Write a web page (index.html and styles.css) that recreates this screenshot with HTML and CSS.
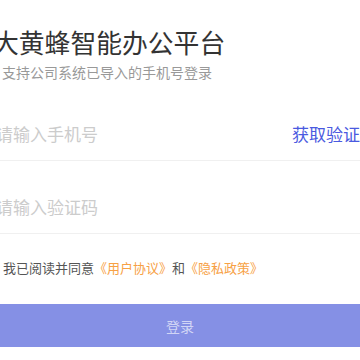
FILE: index.html
```html
<!DOCTYPE html>
<html lang="zh-CN">
<head>
<meta charset="utf-8">
<title>大黄蜂智能办公平台</title>
<link rel="stylesheet" href="styles.css">
</head>
<body>
<div class="page">
  <h1 class="title">大黄蜂智能办公平台</h1>
  <p class="subtitle">支持公司系统已导入的手机号登录</p>
  <div class="field field-phone">
    <input class="input" type="tel" placeholder="请输入手机号">
    <span class="get-code">获取验证码</span>
  </div>
  <div class="field field-code">
    <input class="input" type="text" placeholder="请输入验证码">
  </div>
  <p class="agree">我已阅读并同意<span class="link">《用户协议》</span>和<span class="link">《隐私政策》</span></p>
  <button class="login" type="button">登录</button>
</div>
</body>
</html>
```
FILE: styles.css
```css
html, body {
  margin: 0;
  padding: 0;
  background: #ffffff;
  overflow: hidden;
}
body {
  font-family: "Noto Sans CJK SC", "Noto Sans", sans-serif;
  width: 360px;
  height: 360px;
}
.page {
  display: flex;
  flex-direction: column;
  width: 360px;
}
.title {
  margin: 25px 0 0 -7px;
  font-size: 25.8px;
  line-height: 34px;
  font-weight: 400;
  color: #333333;
  white-space: nowrap;
}
.subtitle {
  margin: 3px 0 0 2px;
  font-size: 14px;
  line-height: 20px;
  color: #999999;
  white-space: nowrap;
}
.field {
  display: flex;
  align-items: center;
  height: 53px;
  border-bottom: 1px solid #f0f0f0;
}
.field-phone {
  margin-top: 25px;
}
.field-code {
  margin-top: 19px;
}
.input {
  border: none;
  outline: none;
  padding: 0;
  margin-left: -4px;
  width: 296px;
  flex: none;
  font-family: inherit;
  font-size: 17px;
  line-height: 24px;
  color: #333333;
  background: transparent;
}
.input::placeholder {
  color: #cccccc;
}
.get-code {
  flex: none;
  white-space: nowrap;
  font-size: 17px;
  color: #4a5ae0;
}
.agree {
  margin: 25px 0 0 3px;
  font-size: 13px;
  line-height: 18px;
  color: #555555;
  white-space: nowrap;
}
.link {
  color: #f7a145;
}
.login {
  margin-top: 27px;
  width: 360px;
  height: 43px;
  border: none;
  padding: 0;
  background: #8590e5;
  color: rgba(255, 255, 255, 0.65);
  font-family: inherit;
  font-size: 14px;
}
```
